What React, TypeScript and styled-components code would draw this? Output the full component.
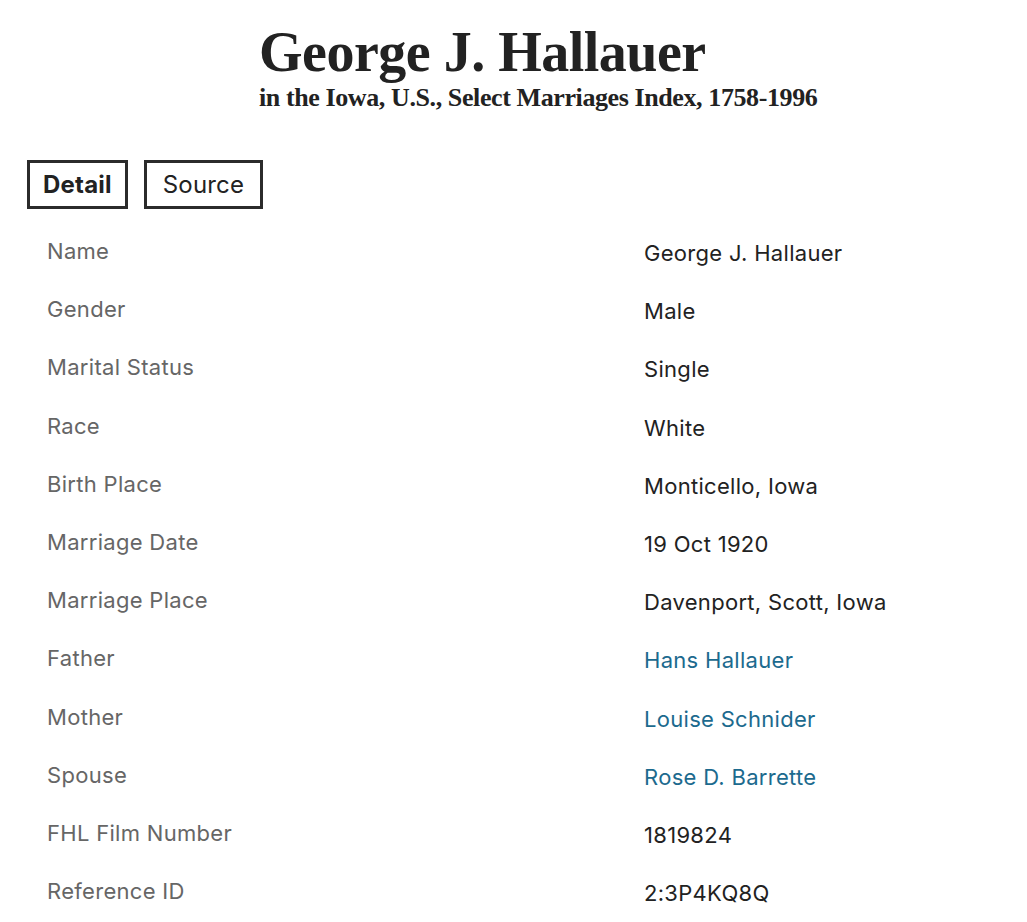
import React from "react";
import styled, { createGlobalStyle } from "styled-components";

const Global = createGlobalStyle`
  html, body { margin: 0; padding: 0; background: #fff; }
  body { font-family: Inter, "Liberation Sans", sans-serif; color: #222; }
`;

const Page = styled.div`
  width: 1027px;
  padding: 0 0 20px 0;
`;

const Header = styled.header`
  padding: 21px 0 0 259px;
  font-family: "Liberation Serif", "DejaVu Serif", serif;
  color: #222;
`;

const Title = styled.h1`
  margin: 0;
  font-size: 56px;
  line-height: 62px;
  font-weight: 700;
  letter-spacing: -0.5px;
`;

const Subtitle = styled.p`
  margin: 0;
  font-size: 26px;
  line-height: 30px;
  font-weight: 700;
  letter-spacing: -0.4px;
`;

const Tabs = styled.div`
  display: flex;
  gap: 16px;
  padding: 47px 0 0 27px;
`;

const Tab = styled.button<{ $active?: boolean }>`
  height: 49px;
  padding: 0 ${(p) => (p.$active ? 13 : 16)}px;
  border: 3px solid #2b2b2b;
  background: #fff;
  font-family: Inter, "Liberation Sans", sans-serif;
  font-size: 24px;
  font-weight: ${(p) => (p.$active ? 700 : 400)};
  letter-spacing: 0.2px;
  color: #222;
  cursor: pointer;
`;

const Table = styled.dl`
  margin: 28px 0 0 0;
  padding: 0 0 0 47px;
  display: grid;
  grid-template-columns: 597px 1fr;
  grid-auto-rows: 58.2px;
`;

const Label = styled.dt`
  margin: 0;
  font-size: 22px;
  line-height: 28px;
  letter-spacing: 0.3px;
  color: #666;
`;

const Value = styled.dd<{ $link?: boolean }>`
  margin: 0;
  padding-top: 2px;
  font-size: 22px;
  line-height: 28px;
  letter-spacing: 0.3px;
  color: ${(p) => (p.$link ? "#1c6a8e" : "#222")};
`;

const rows: { label: string; value: string; link?: boolean }[] = [
  { label: "Name", value: "George J. Hallauer" },
  { label: "Gender", value: "Male" },
  { label: "Marital Status", value: "Single" },
  { label: "Race", value: "White" },
  { label: "Birth Place", value: "Monticello, Iowa" },
  { label: "Marriage Date", value: "19 Oct 1920" },
  { label: "Marriage Place", value: "Davenport, Scott, Iowa" },
  { label: "Father", value: "Hans Hallauer", link: true },
  { label: "Mother", value: "Louise Schnider", link: true },
  { label: "Spouse", value: "Rose D. Barrette", link: true },
  { label: "FHL Film Number", value: "1819824" },
  { label: "Reference ID", value: "2:3P4KQ8Q" },
];

export default function App() {
  return (
    <Page>
      <Global />
      <Header>
        <Title>George J. Hallauer</Title>
        <Subtitle>in the Iowa, U.S., Select Marriages Index, 1758-1996</Subtitle>
      </Header>
      <Tabs>
        <Tab $active>Detail</Tab>
        <Tab>Source</Tab>
      </Tabs>
      <Table>
        {rows.map((r) => (
          <React.Fragment key={r.label}>
            <Label>{r.label}</Label>
            <Value $link={r.link}>{r.value}</Value>
          </React.Fragment>
        ))}
      </Table>
    </Page>
  );
}
